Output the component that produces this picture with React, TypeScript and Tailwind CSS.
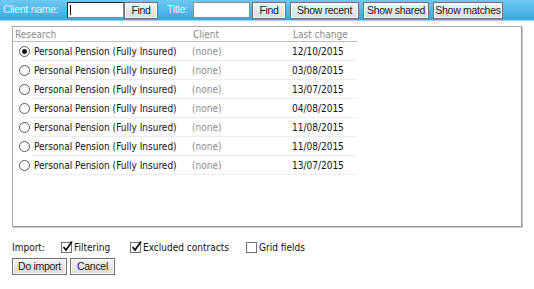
import React from "react";

const rows = [
  ["12/10/2015", true],
  ["03/08/2015", false],
  ["13/07/2015", false],
  ["04/08/2015", false],
  ["11/08/2015", false],
  ["11/08/2015", false],
  ["13/07/2015", false],
] as const;

const ui = { fontFamily: "'Liberation Sans',Arial,sans-serif", letterSpacing: "-0.3px" };

function Btn({ children, w }: { children: React.ReactNode; w: string }) {
  return (
    <div
      className={`${w} h-[17px] flex items-center justify-center whitespace-nowrap border border-[#707070] bg-gradient-to-b from-[#f2f2f2] to-[#dcdcdc] text-[10.5px] text-[#1a1a1a] leading-none shadow-[inset_0_0_0_1px_#fbfbfb]`}
      style={ui}
    >
      {children}
    </div>
  );
}

function Radio({ on }: { on: boolean }) {
  return (
    <div className="w-[11px] h-[11px] rounded-full border border-[#5a5a5a] bg-white flex items-center justify-center">
      {on && <div className="w-[5px] h-[5px] rounded-full bg-[#111]" />}
    </div>
  );
}

function Check({ on }: { on: boolean }) {
  return (
    <div className="w-[11px] h-[11px] border border-[#707070] bg-white relative">
      {on && (
        <svg className="absolute -left-[1px] -top-[3px]" width="13" height="13" viewBox="0 0 13 13">
          <path d="M2.5 7 L5 10 L11 1.5" fill="none" stroke="#111" strokeWidth="1.8" />
        </svg>
      )}
    </div>
  );
}

export default function App() {
  const f = { fontFamily: "'DejaVu Sans Condensed','DejaVu Sans',sans-serif" };
  return (
    <div className="w-[534px] h-[289px] bg-white relative overflow-hidden" style={f}>
      <div className="h-[21px] bg-gradient-to-b from-[#6cc8f0] to-[#38a7df] border-b border-[#9ad6f2] flex items-center pl-[3px]">
        <span className="text-[10.5px] text-[#e3f3fc] w-[64px] whitespace-nowrap" style={ui}>Client name:</span>
        <div className="w-[57px] h-[16px] bg-white border border-[#222] border-r-[#888] border-b-[#888]">
          <div className="ml-[2px] mt-[2px] w-px h-[10px] bg-black" />
        </div>
        <Btn w="w-[34px]">Find</Btn>
        <span className="ml-[9px] text-[10.5px] text-[#e3f3fc] w-[26px] whitespace-nowrap" style={ui}>Title:</span>
        <div className="w-[57px] h-[16px] bg-white border border-[#8a8a8a]" />
        <div className="ml-[2px]"><Btn w="w-[34px]">Find</Btn></div>
        <div className="ml-[4px]"><Btn w="w-[69px]">Show recent</Btn></div>
        <div className="ml-[4px]"><Btn w="w-[66px]">Show shared</Btn></div>
        <div className="ml-[4px]"><Btn w="w-[70px]">Show matches</Btn></div>
      </div>

      <div className="absolute left-[12px] top-[26px] w-[510px] h-[201px] border border-[#a8a8a8] border-r-[#9a9a9a] border-b-[#9a9a9a] shadow-[1px_1px_0_#c8c8c8] bg-white">
        <div className="w-[344px] text-[10px]">
          <div className="h-[15px] flex items-center border-b border-[#bfbfbf] text-[#8a8a8a]">
            <span className="pl-[2px] w-[180px]">Research</span>
            <span className="w-[100px]">Client</span>
            <span>Last change</span>
          </div>
          {rows.map(([d, on], i) => (
            <div key={i} className="h-[19px] flex items-center">
              <div className="w-[19px] pl-[6px] flex items-center"><Radio on={on} /></div>
              <div className="flex-1 h-full flex items-center border-b border-[#ececec] pl-[2px]">
                <span className="w-[158px] text-[#111] whitespace-nowrap">Personal Pension (Fully Insured)</span>
                <span className="w-[100px] text-[#8a8a8a]">(none)</span>
                <span className="text-[#111]">{d}</span>
              </div>
            </div>
          ))}
        </div>
      </div>

      <div className="absolute left-[12px] top-[240px] text-[10px] text-[#111]">
        <div className="flex items-center h-[14px] whitespace-nowrap">
          <span className="w-[49px]">Import:</span>
          <Check on={true} />
          <span className="ml-[2px] w-[56px]">Filtering</span>
          <Check on={true} />
          <span className="ml-[2px] w-[103px]">Excluded contracts</span>
          <Check on={false} />
          <span className="ml-[2px]">Grid fields</span>
        </div>
        <div className="flex gap-[3px] mt-[4px]">
          <Btn w="w-[55px]">Do import</Btn>
          <Btn w="w-[45px]">Cancel</Btn>
        </div>
      </div>
    </div>
  );
}
